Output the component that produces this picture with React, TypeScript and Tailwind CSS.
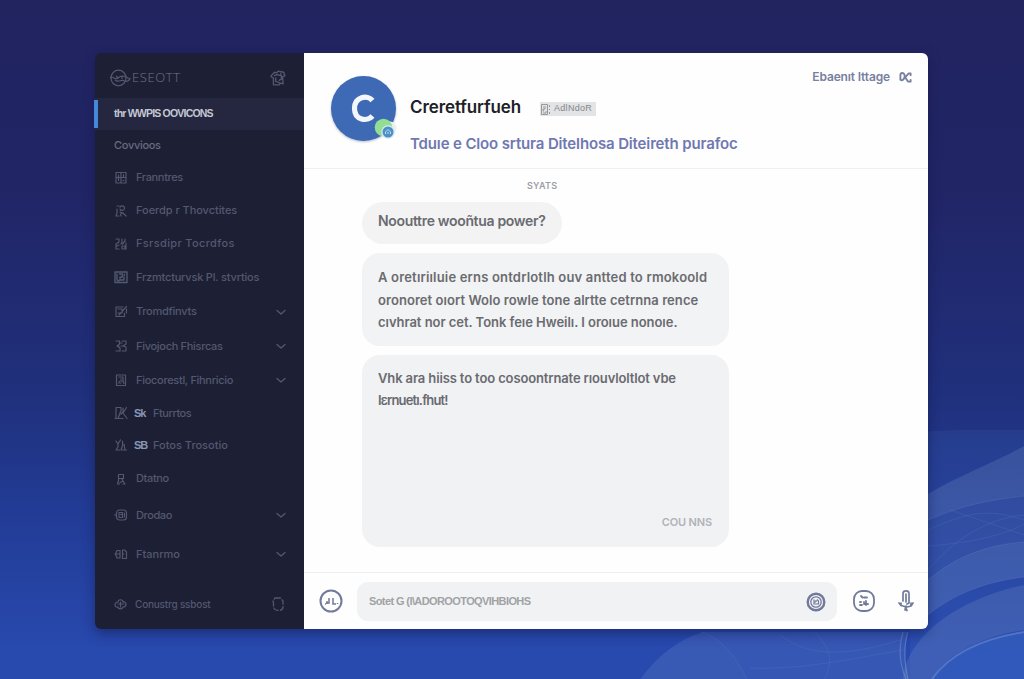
import type { ReactNode } from "react";

const sans = "font-['Liberation_Sans',Arial,sans-serif]";
const inter = "font-[Inter,'Liberation_Sans',sans-serif]";

function Glyph({ children, className = "size-[14px]" }: { children: ReactNode; className?: string }) {
  return (
    <svg viewBox="0 0 14 14" fill="none" stroke="currentColor" strokeWidth="1.2" strokeLinecap="round" strokeLinejoin="round" className={`shrink-0 ${className}`}>
      {children}
    </svg>
  );
}

function Chevron() {
  return (
    <svg viewBox="0 0 12 12" fill="none" stroke="currentColor" strokeWidth="1.3" strokeLinecap="round" strokeLinejoin="round" className="size-3 shrink-0">
      <path d="M2 4.500 6 8l4-3.500" />
    </svg>
  );
}

type Item = { label: string; height: string; tracking: string; icon: ReactNode; tag?: string; chevron?: boolean };

const items: Item[] = [
  {
    label: "Franntres", height: "h-[33px]", tracking: "tracking-[-0.35px]",
    icon: <path d="M2 1.500h10v10.500H2zM7 1.500V12M2 6.500h10M4.500 4v5.500M9.500 3.500v3M9 9.500h1" />,
  },
  {
    label: "Foerdp r Thovctites", height: "h-[33px]", tracking: "tracking-[-0.05px]",
    icon: <path d="M3 2h2M6 3c2-2 5-1 4.500 1.500S6.500 7 6 5M3 5v4l-1 3h3M6 8l3 1 3 3M7 12c-1-2 0-3 2-3" />,
  },
  {
    label: "Fsrsdipr Tocrdfos", height: "h-[33px]", tracking: "tracking-[0.35px]",
    icon: <path d="M2 2h3v3L2 7v5h3M5 8 3 9M8 2v3l-1 2M11 2v2L8.500 7M8 9h3v3H8zM12 6v6" />,
  },
  {
    label: "Frzmtcturvsk Pl. stvrtios", height: "h-[34px]", tracking: "tracking-[-0.2px]",
    icon: <path d="M1 2h12v10.500H1zM3 4v6l2 1M5.500 4h3v3H6v3h4V7M10.500 4.200v1" strokeWidth="1.400" />,
  },
  {
    label: "Tromdfinvts", height: "h-[35px]", tracking: "tracking-[-0.25px]", chevron: true,
    icon: <path d="M9 2H2v9.500h8.500V8M4 4h4v4H4M5 10l7.500-8.500M12.500 4v4" />,
  },
  {
    label: "Fivojoch Fhisrcas", height: "h-[34px]", tracking: "tracking-[-0.3px]", chevron: true,
    icon: <path d="M2 2h3.500v3L3 7l3 2v3H2M6 4h2M8 2h4v3L9 7l3 1v4H8M7 7h2M4 7h1" />,
  },
  {
    label: "Fiocorestl, Fihnricio", height: "h-[34px]", tracking: "tracking-[-0.3px]", chevron: true,
    icon: <path d="M2.500 2h9v10.500h-9zM5 4h4v4H6L4.500 10M9 8l1 2.500M6.500 6h1M6 10h1" />,
  },
  {
    label: "Fturrtos", height: "h-8", tracking: "tracking-[-0.45px]", tag: "Sk",
    icon: <path d="M2 1.500v11M2 1.500h5v3L4 12.500h5M9 2v4l-2 2M12.500 1.500 9 7l4 5.500M1 12.500h2" />,
  },
  {
    label: "Fotos Trosotio", height: "h-8", tracking: "tracking-[0px]", tag: "SB",
    icon: <path d="m2 3 2 3 2.500-4M4 6v3l-2 3h3.500M8.500 3v5L7 12h3M10 6l1 6h1.500" />,
  },
  {
    label: "Dtatno", height: "h-[35px]", tracking: "tracking-[-0.35px]",
    icon: <path d="M4.500 2.500h5v4h-5zM4.500 6.500v2l-1 3.500h2M8 7l1 2-3 1.500M9 9l2 3H9" />,
  },
  {
    label: "Drodao", height: "h-[38px]", tracking: "tracking-[-0.4px]", chevron: true,
    icon: <><rect x="2.500" y="2" width="10" height="10" rx="3" /><path d="M5 4.500v5h3.500v-5zM6.500 6.500h1M.5 7h2M10.500 5v4" /></>,
  },
  {
    label: "Ftanrmo", height: "h-10", tracking: "tracking-[0px]", chevron: true,
    icon: <path d="M6 3.500H3L1.500 7 3 11h3V3.500M1 7h5M8.500 3v8.500h4V5l-2-2zM8.500 7H10" />,
  },
];

function SidebarItem({ item }: { item: Item }) {
  return (
    <li className={`flex items-center ${item.height}`}>
      <Glyph>{item.icon}</Glyph>
      {item.tag && <span className={`ml-[6px] w-[13px] text-[11px] font-bold tracking-[-1.2px] text-[#8797b5] ${sans}`}>{item.tag}</span>}
      <span className={`${item.tag ? "ml-[6px]" : "ml-2"} grow whitespace-pre text-[11px] ${item.tracking}`}>{item.label}</span>
      {item.chevron && <Chevron />}
    </li>
  );
}

function Sidebar() {
  return (
    <aside className={`flex w-[209px] shrink-0 flex-col rounded-l-[6px] bg-[#1d1f34] font-medium text-[#535870] ${inter}`}>
      <div className="flex h-[45px] items-center pt-1 pr-[18px] pl-[14px]">
        <svg viewBox="0 0 22 18" fill="none" stroke="currentColor" strokeWidth="1.2" className="h-[18px] w-[22px] shrink-0">
          <ellipse cx="9.500" cy="9" rx="7.500" ry="7.800" />
          <path d="M1 9c3-3 5 3 8 0s7-2 10 0l2 .5c-2 4-5 3-7 2S9 14 6 11M7 7l2 2M13 7v3" />
        </svg>
        <span className="ml-px grow font-['Open_Sans',sans-serif] text-[13px] leading-none font-light tracking-[0.6px] text-[#73758a]">ESEOTT</span>
        <Glyph className="size-4">
          <path d="m1 5 3-3 2 .5L7 1l5 1 1 3-2 1 .5 6-2.500-.5L8 13H3V7L1 6zM4 5l2-1 4 1v3L8 9M5 7v3l3 1M9.500 3v1" />
        </Glyph>
      </div>
      <div className="flex h-8 items-center bg-[#24273f]">
        <span className="-ml-px h-[28px] w-1 bg-[#4488d8]" />
        <span className={`pl-4 text-[10.500px] font-bold tracking-[-0.8px] whitespace-pre text-[#c5c7d5] ${sans}`}>thr WWPIS OOVICONS</span>
      </div>
      <div className="flex h-[31px] items-center pl-[19px] text-[11px] tracking-[-0.3px] text-[#686b80]">Covvioos</div>
      <ul className="pr-[17px] pl-[19px]">
        {items.map((item) => <SidebarItem key={item.label} item={item} />)}
      </ul>
      <div className="flex grow items-center pt-[5px] pr-[19px] pl-[19px]">
        <Glyph>
          <path d="M4 5c0-3 5-3 5 0 4-1 4 5 0 5-1 3-5 2-5 0-4 1-4-5 0-5zM4 7h6M6.500 5v5" />
        </Glyph>
        <span className="ml-[7px] grow text-[10px] tracking-[-0.2px]">Conustrg ssbost</span>
        <svg viewBox="0 0 14 16" fill="none" stroke="currentColor" strokeWidth="1.3" strokeDasharray="6 1.200" className="h-4 w-[14px]">
          <path d="M4 2h5.500l2.500 3v6c0 2-1.500 3.500-4 3.500S2.500 13 2.500 11V7L2 5z" />
        </svg>
      </div>
    </aside>
  );
}

function Header() {
  return (
    <header className="flex h-[116px] shrink-0 border-b border-[#f0f0f2] pr-4 pl-[27px]">
      <div className="relative mt-[23px] size-[65px] shrink-0">
        <svg viewBox="0 0 65 65" className="size-[65px] drop-shadow-[0_1px_1px_rgba(40,60,110,0.35)]">
          <circle cx="32.500" cy="32.500" r="32.500" fill="#3e69b5" />
          <path d="M41.500 24.500c-5-6-18-4-18 8s13 13.500 18 7.500" fill="none" stroke="#f3f6fb" strokeWidth="5.200" />
        </svg>
        <svg viewBox="0 0 24 24" className="absolute top-[42px] left-[43px] size-6">
          <circle cx="16" cy="10" r="6.500" fill="#e8f1ee" />
          <circle cx="9.500" cy="9.500" r="8.800" fill="#92df94" />
          <circle cx="14" cy="14" r="6.800" fill="#d5e9ef" />
          <circle cx="14" cy="14" r="5.500" fill="#4f8fc8" />
          <path d="M11.500 16v-2l2.500-2.500 2.500 2.500v2M13 15h2" fill="none" stroke="#bcdcef" />
        </svg>
      </div>
      <div className="ml-[14px] grow pt-[44px]">
        <div className="flex h-[22px] items-center">
          <h1 className={`w-[130px] text-[17px] font-semibold tracking-[-0.1px] whitespace-nowrap text-[#202126] ${inter}`}>Creretfurfueh</h1>
          <div className="mt-[2px] flex h-[14px] w-[56px] shrink-0 items-center gap-[2px] bg-[#e2e4e5] pl-[1px] text-[#85878b]">
            <svg viewBox="0 0 11 11" fill="none" stroke="currentColor" strokeWidth="0.800" className="size-[11px]">
              <path d="M.5.500h6v10h-6zM2 3h1M4 2v3H2v2h1M5 7v2H2M8.500 1v2M8.500 5v1M8.500 8v2" />
            </svg>
            <span className={`text-[9px] tracking-[0.3px] ${sans}`}>AdlNdoR</span>
          </div>
        </div>
        <p className={`mt-[15px] text-[15px] leading-5 font-semibold tracking-[-0.14px] whitespace-nowrap text-[#7078b2] ${inter}`}>Tduıe e Cloo srtura Ditelhosa Diteireth purafoc</p>
      </div>
      <div className="flex h-6 items-center self-start pt-6 text-[#78809f]">
        <div className="flex items-center gap-[9px]">
          <span className={`text-[12px] font-semibold tracking-[-0.15px] whitespace-nowrap ${inter}`}>Ebaenıt Ittage</span>
          <Glyph className="size-[13px]">
            <path d="M1.500 4.500v5c2 1.500 4-.5 4.500-3S5 2 3.500 2.200 1.500 3.500 1.500 4.500M6.500 7l4-4.500h2v2M6.500 7c1 0 2 3.500 3.500 4.500h2.500V9.500" strokeWidth="2" />
          </Glyph>
        </div>
      </div>
    </header>
  );
}

function Conversation() {
  return (
    <section className={`grow pl-[58px] font-semibold text-[#6a6b70] ${inter}`}>
      <div className="ml-[165px] flex h-[33px] items-center text-[9px] leading-none tracking-[0.25px] text-[#9c9ea2]">SYATS</div>
      <div className="flex h-[42px] w-[200px] items-center rounded-[21px] bg-[#f3f3f4] pb-[5px] pl-4 text-[14px] tracking-[-0.33px] whitespace-nowrap">Noouttre wooñtua power?</div>
      <div className="mt-[9px] h-[93px] w-[367px] rounded-[18px] bg-[#f2f3f4] pt-[13px] pl-4 text-[13px] leading-[22.500px] whitespace-nowrap">
        <p className="tracking-[0.18px]">A oretıriıluie erns ontdrlotlh ouv antted to rmokoold</p>
        <p className="tracking-[0.06px]">oronoret oıort Wolo rowle tone alrtte cetrnna rence</p>
        <p className="tracking-[-0.04px]">cıvhrat nor cet. Tonk feıe Hweilı. I oroıue nonoıe.</p>
      </div>
      <div className="mt-[9px] flex h-[192px] w-[367px] flex-col justify-between rounded-[18px] bg-[#f1f2f4] px-4 pt-[12px] pb-4 text-[13px] leading-[22px] whitespace-nowrap">
        <div>
          <p className="tracking-[-0.13px]">Vhk ara hiiss to too cosoontrnate rıouvloltlot vbe</p>
          <p className="tracking-[-0.85px]">Iɛrnuetı.fhut!</p>
        </div>
        <span className="mr-[1px] self-end text-[11px] leading-[18px] tracking-[-0.15px] text-[#b0b3b8]">COU NNS</span>
      </div>
    </section>
  );
}

function Composer() {
  return (
    <footer className="flex h-[57px] shrink-0 items-center border-t border-[#eeeff1] pr-[13px] pl-[15px] text-[#717a9b]">
      <svg viewBox="0 0 24 24" fill="none" stroke="currentColor" strokeWidth="2" className="size-6 shrink-0">
        <circle cx="12" cy="12" r="10.500" />
        <path d="M7 14h3V9M8 12v3M14 9v6h3M18.500 14v1M6 15h1" strokeWidth="1.500" />
      </svg>
      <div className="mt-px ml-[14px] flex h-[39px] w-[480px] shrink-0 items-center justify-between rounded-[11px] bg-[#f1f2f4] pr-[11px] pl-[12px]">
        <span className={`text-[11px] font-semibold tracking-[-0.6px] whitespace-nowrap text-[#a0a2a6] ${sans}`}>Sotet G (l\ADOROOTOQVIHBIOHS</span>
        <svg viewBox="0 0 20 20" fill="none" stroke="currentColor" className="size-5">
          <circle cx="10" cy="10" r="8.300" strokeWidth="2.400" />
          <circle cx="10" cy="10" r="5.200" strokeWidth="1.300" />
          <path d="M8 7.500v4.500h4.500V9L11 7.500M8 10h2M10 8v2" strokeWidth="1.200" />
        </svg>
      </div>
      <svg viewBox="0 0 24 24" fill="none" stroke="currentColor" strokeWidth="1.800" strokeLinecap="round" className="ml-[15px] size-6 shrink-0">
        <rect x="2" y="2" width="20" height="20" rx="8" />
        <path d="m9 7 1.500 1.500M12 8.500h3M8 13h1M8 16h2M12 15h4M14 12v4M12 13v1" />
      </svg>
      <svg viewBox="0 0 18 24" fill="none" stroke="currentColor" strokeWidth="1.700" strokeLinecap="round" strokeLinejoin="round" className="ml-[21px] h-6 w-[18px] shrink-0">
        <path d="M6 12V4.500C6 1 12 1 12 4.500V14l-2 1M9 5v8M2 14l2 2.500 4 1 2 4M16 14l-2 3-4 1M4 14v2M14 14v3M9 17l-1 4h1.500" />
      </svg>
    </footer>
  );
}

function Waves() {
  return (
    <svg viewBox="0 0 384 249" className="absolute right-0 bottom-0 h-[249px] w-96">
      <path d="M270 3C310-1 350 0 384 0v249H270z" fill="#4c7cd0" fillOpacity="0.130" />
      <path d="M288 64C320 45 355 32 384 16v50c-35 4-65 10-96 24z" fill="#7c98c4" fillOpacity="0.240" />
      <path d="M288 90c31-14 61-20 96-24v46c-36 3-66 13-96 38z" fill="#7c98c4" fillOpacity="0.120" />
      <path d="M288 150c30-25 60-35 96-38v35c-40 5-70 17-96 38z" fill="#7c98c4" fillOpacity="0.260" />
      <path d="M263 249c4-43 55-80 121-94v45c-45 7-78 25-92 49z" fill="#7c98c4" fillOpacity="0.230" />
      <path d="M292 249c17-24 47-40 92-47v47z" fill="#3564c4" fillOpacity="0.500" />
      <path d="M0 249c20-25 35-37 62-47h206c-4 15-3 30 0 47z" fill="#7ba0d8" fillOpacity="0.170" />
      <path d="M62 202c25 10 35 28 45 47H0c20-25 35-37 62-47z" fill="#7ba0d8" fillOpacity="0.040" />
      <g fill="none" stroke="#96b2df" strokeOpacity="0.220" strokeWidth="0.700">
        <path d="M288 90c31-14 61-20 96-24M288 150c30-25 60-35 96-38M288 185c26-21 56-33 96-38" />
        <path d="M288 100c40-18 60-22 96-10M288 140c25-30 60-52 96-55M310 80l74 25M288 116c40-3 75-10 96-22" strokeOpacity="0.160" />
        <path d="M292 249c17-24 47-40 92-47" strokeWidth="2" strokeOpacity="0.350" />
        <path d="M263 202c-5 16-4 30 3 47M268 202c-5 16-4 30 0 47" strokeWidth="1.200" strokeOpacity="0.350" />
        <path d="M62 202c25 10 35 28 45 47M140 205c15 10 40 30 120 5M185 249c10-25 3-30-10-47M110 238c50 2 95-8 153-18" strokeOpacity="0.160" />
      </g>
    </svg>
  );
}

export default function App() {
  return (
    <main className="relative h-[679px] w-[1024px] overflow-hidden bg-[linear-gradient(180deg,#222460_0%,#212566_28%,#20307c_58%,#223c96_76%,#2849ae_96%)] pt-[53px] pl-[95px]">
      <Waves />
      <div className="relative flex h-[576px] w-[833px] rounded-[6px] shadow-[0_4px_12px_rgba(15,20,65,0.500)]">
        <Sidebar />
        <div className="flex min-w-0 grow flex-col rounded-r-[6px] bg-[#fefefe]">
          <Header />
          <Conversation />
          <Composer />
        </div>
      </div>
    </main>
  );
}
